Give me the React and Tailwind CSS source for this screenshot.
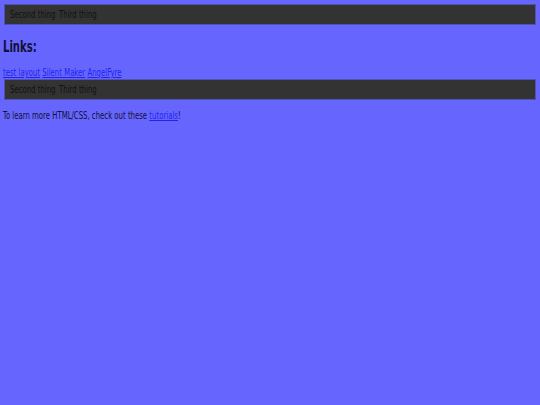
const Squash = ({ children, className = '' }) => (
  <span className={`inline-block origin-left scale-x-[0.7] whitespace-nowrap ${className}`}>{children}</span>
);

const Bar = () => (
  <div className="mx-[1px] flex h-[21px] items-center border border-[#5050b0] bg-[#333333] pl-[5px] text-[#111111]">
    <Squash>
      <span className="mr-[5px]">Second thing</span>
      <span>Third thing</span>
    </Squash>
  </div>
);

export default function App() {
  return (
    <div
      className="min-h-[405px] bg-[#6666ff] px-[3px] pt-[4px] text-[11px] leading-[12px] text-[#111133]"
      style={{ fontFamily: '"DejaVu Sans Condensed", "DejaVu Sans", sans-serif' }}
    >
      <Bar />

      <h2 className="mt-[12px] text-[16px] font-bold leading-[20px] text-[#111133]">
        <Squash>Links:</Squash>
      </h2>

      <div className="mt-[10px]">
        <Squash>
          <a href="#" className="text-[#2222ee] underline">test layout</a>{' '}
          <a href="#" className="text-[#2222ee] underline">Silent Maker</a>{' '}
          <a href="#" className="text-[#2222ee] underline">AngelFyre</a>
        </Squash>
      </div>

      <Bar />

      <p className="mt-[10px]">
        <Squash>
          To learn more HTML/CSS, check out these{' '}
          <a href="#" className="text-[#2222ee] underline">tutorials</a>!
        </Squash>
      </p>
    </div>
  );
}
